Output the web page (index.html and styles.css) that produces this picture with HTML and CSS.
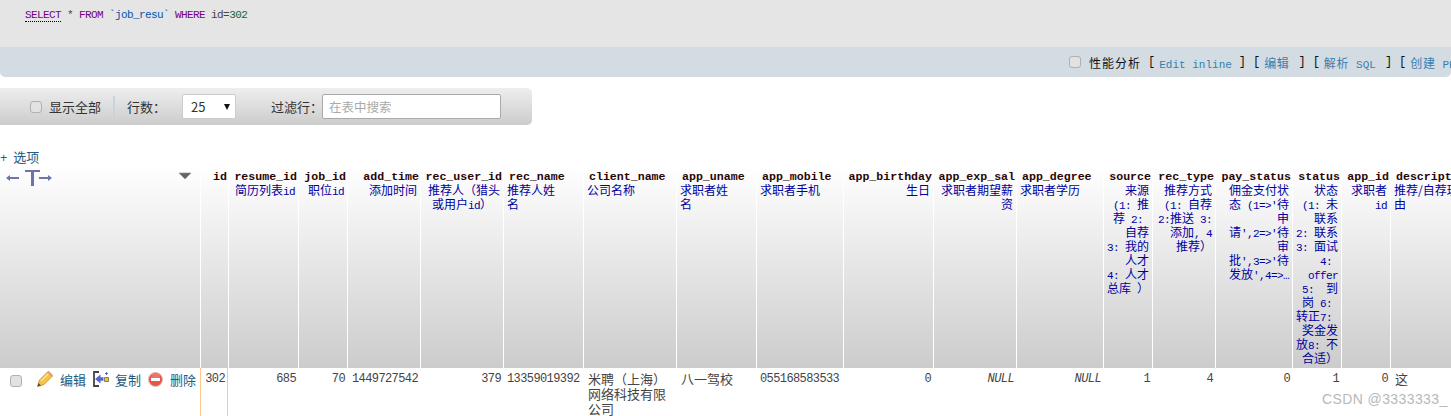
FILE: index.html
```html
<!DOCTYPE html>
<html lang="zh-CN">
<head>
<meta charset="utf-8">
<title>job_resu</title>
<link rel="stylesheet" href="styles.css">
</head>
<body>
<div class="sql"><span class="kw under">SELECT</span> * <span class="kw">FROM</span> <span class="str">`job_resu`</span> <span class="kw">WHERE</span> id=<span class="num">302</span></div>
<div class="bar">
  <input type="checkbox" class="chk">
  <span class="bar-t">性能分析</span>
  <span class="bk">[</span><a class="lnk lnk-e"><span class="lm">Edit inline</span></a><span class="bk bk-c">]</span>
  <span class="bk">[</span><a class="lnk">编辑</a><span class="bk bk-c">]</span>
  <span class="bk">[</span><a class="lnk">解析<span class="lm lm-s">SQL</span></a><span class="bk bk-c">]</span>
  <span class="bk">[</span><a class="lnk">创建<span class="lm lm-s">PHP</span></a>
</div>
<div class="filter">
  <input type="checkbox" class="chk">
  <span class="f-all">显示全部</span>
  <span class="sep"></span>
  <span class="f-rows">行数：</span>
  <span class="sel">25<i class="tri"></i></span>
  <span class="f-flt">过滤行：</span>
  <input class="search" type="text" placeholder="在表中搜索">
</div>
<div class="opts"><a><span class="plus">+</span>选项</a></div>
<table class="data">
<colgroup>
<col class="c0"><col class="c1"><col class="c2"><col class="c3"><col class="c4"><col class="c5"><col class="c6"><col class="c7"><col class="c8"><col class="c9"><col class="c10"><col class="c11"><col class="c12"><col class="c13"><col class="c14"><col class="c15"><col class="c16"><col class="c17"><col class="c18">
</colgroup>
<thead>
<tr>
<th class="act-h">
  <div class="act-top">
    <svg class="lr" width="48" height="16" viewBox="0 0 48 16"><path d="M1 8l4-3v2h9v2H5v2z M47 8l-4-3v2h-9v2h9v2z M20 0h15v2h-6v14h-3V2h-6z" fill="#6b75ab"/></svg>
    <svg class="sort" width="12" height="8" viewBox="0 0 12 8"><path d="M0 1h12L6 7z" fill="#666" stroke="#888" stroke-width=".6"/></svg>
  </div>
</th>
<th class="r"><b>id</b></th>
<th class="r"><b>resume_id</b><br>简历列表<span class="m">id</span></th>
<th class="r"><b>job_id</b><br>职位<span class="m">id</span></th>
<th class="r"><b>add_time</b><br>添加时间</th>
<th class="r"><b>rec_user_id</b><br>推荐人（猎头<br><span class="ctr">或用户<span class="m">id</span>）</span></th>
<th class="l"><b>rec_name</b><br>推荐人姓<br>名</th>
<th class="l"><b>client_name</b><br>公司名称</th>
<th class="l"><b>app_uname</b><br>求职者姓<br>名</th>
<th class="l"><b>app_mobile</b><br>求职者手机</th>
<th class="r"><b>app_birthday</b><br>生日</th>
<th class="r"><b>app_exp_sal</b><br>求职者期望薪<br>资</th>
<th class="l"><b>app_degree</b><br>求职者学历</th>
<th class="r"><b>source</b><br>来源<br><span class="m">(1: </span>推<br>荐<span class="m"> 2:&nbsp;</span><br>自荐<br><span class="m">3: </span>我的<br>人才<br><span class="m">4: </span>人才<br>总库<span class="m"> </span>）</th>
<th class="r"><b>rec_type</b><br>推荐方式<br><span class="m">(1: </span>自荐<br><span class="m">2:</span>推送<span class="m"> 3:</span><br>添加<span class="m">, 4</span><br>推荐）</th>
<th class="r"><b>pay_status</b><br>佣金支付状<br>态<span class="m"> (1=&gt;'</span>待<br>申<br>请<span class="m">',2=&gt;'</span>待<br>审<br>批<span class="m">',3=&gt;'</span>待<br>发放<span class="m">',4=&gt;…</span></th>
<th class="r"><b>status</b><br>状态<br><span class="m">(1: </span>未<br>联系<br><span class="m">2: </span>联系<br><span class="m">3: </span>面试<br><span class="m">4:&nbsp;</span><br><span class="m">offer</span><br><span class="m">5:&nbsp; </span>到<br>岗<span class="m"> 6:&nbsp;</span><br>转正<span class="m">7:&nbsp;</span><br>奖金发<br>放<span class="m">8: </span>不<br>合适）</th>
<th class="r"><b>app_id</b><br>求职者<br><span class="m">id</span></th>
<th class="l"><b>description</b><br>推荐/自荐理<br>由</th>
</tr>
</thead>
<tbody>
<tr>
<td class="acts">
  <div class="act-row">
    <input type="checkbox" class="chk row-chk">
    <svg class="ico pencil" width="16" height="16" viewBox="0 0 16 16"><path d="M.5 15.500L2.500 9 10.500 1 15 5.500 7 13.500z" fill="#f4c24a" stroke="#c08c2c" stroke-width=".8"/><path d="M4 10l7.500-7.500" stroke="#fbe39a" stroke-width="1.400"/><path d="M10.500 1l1-1 4.500 4.500-1 1z" fill="#ee9f8c" stroke="#c08c2c" stroke-width=".5"/><path d="M.5 15.500L1.500 12l2.500 2.500z" fill="#5a4a30"/></svg>
    <a class="act">编辑</a>
    <svg class="ico copy" width="16" height="16" viewBox="0 0 16 16"><path d="M6 1H1v14h5" fill="none" stroke="#444" stroke-width="1.800"/><path d="M2 8l5.500-4.500v2.800h3v3.400h-3v2.800z" fill="#5a63d0"/><path d="M11.500 6.500h4v4h-4z" fill="#f5c518" stroke="#555" stroke-width=".7"/><path d="M13.500 1v3M12 2.500h3" stroke="#5a63d0"/></svg>
    <a class="act">复制</a>
    <svg class="ico del" width="15" height="15" viewBox="0 0 15 15"><circle cx="7.500" cy="7.500" r="7" fill="#e0574c" stroke="#dcc4bc"/><circle cx="7.500" cy="5" r="4.500" fill="#ec8a80" opacity=".6"/><rect x="3" y="6" width="9" height="3" fill="#fff"/></svg>
    <a class="act">删除</a>
  </div>
</td>
<td class="mark num-c">302</td>
<td class="num-c">685</td>
<td class="num-c">70</td>
<td class="num-c">1449727542</td>
<td class="num-c">379</td>
<td class="num-l">13359019392</td>
<td class="txt">米聘（上海）网络科技有限公司</td>
<td class="txt">八一驾校</td>
<td class="num-l">055168583533</td>
<td class="num-c">0</td>
<td class="null">NULL</td>
<td class="null">NULL</td>
<td class="num-c">1</td>
<td class="num-c">4</td>
<td class="num-c">0</td>
<td class="num-c">1</td>
<td class="num-c">0</td>
<td class="txt">这</td>
</tr>
</tbody>
</table>
<div class="wm">CSDN @3333333_</div>
</body>
</html>
```
FILE: styles.css
```css
html, body {
  margin: 0;
  height: 416px;
  overflow: hidden;
  background: #fff;
}
body {
  position: relative;
  font-family: "Noto Sans CJK SC", "Liberation Sans", sans-serif;
  font-size: 13px;
  color: #444;
}
.sql {
  height: 47px;
  box-sizing: border-box;
  padding: 8px 0 0 25px;
  background: #e5e5e5;
  font: 11px/15px "Liberation Mono", monospace;
  letter-spacing: -.6px;
  color: #444;
}
.kw { color: #770088; }
.under { border-bottom: 1px dotted #000; }
.str { color: #0055aa; }
.num { color: #116644; }
.bar {
  height: 30px;
  display: flex;
  align-items: center;
  padding-left: 1069px;
  background: #d3dce3;
  border-radius: 0 0 5px 5px;
  white-space: nowrap;
  overflow: hidden;
  color: #111;
  font-size: 12px;
}
.chk {
  appearance: none;
  width: 12px;
  height: 12px;
  margin: 0;
  flex: none;
  background: #e2e2e2;
  border: 1px solid #b0b0b0;
  border-radius: 3px;
  box-sizing: border-box;
}
.bar-t { margin: 0 7px 0 8px; letter-spacing: 1px; }
.bk { font: 12px "Liberation Mono", monospace; }
.bk-c { margin-right: 7px; }
.lnk { color: #3a7ead; margin: 0 9px 0 4px; letter-spacing: .6px; }
.lnk-e { margin-right: 7px; }
.lm { font: 11px "Liberation Mono", monospace; letter-spacing: 0; }
.lm-s { margin-left: 7px; }
.filter {
  margin-top: 11px;
  width: 532px;
  height: 37px;
  display: flex;
  align-items: center;
  box-sizing: border-box;
  padding-left: 30px;
  background: linear-gradient(#eeeeee, #cccccc);
  border-radius: 0 5px 5px 0;
  color: #333;
  white-space: nowrap;
}
.f-all { margin-left: 7px; }
.sep {
  width: 2px;
  height: 22px;
  margin: 0 12px 0 12px;
  background: #c8d4dc;
}
.f-rows { width: 55px; }
.sel {
  position: relative;
  box-sizing: border-box;
  width: 54px;
  height: 25px;
  padding-left: 8px;
  line-height: 24px;
  background: #fff;
  border: 1px solid #ccc;
  border-radius: 2px;
}
.tri {
  position: absolute;
  right: 5px;
  top: 9px;
  border-left: 3.500px solid transparent;
  border-right: 3.500px solid transparent;
  border-top: 6px solid #111;
}
.f-flt { margin-left: 35px; width: 51px; flex: none; }
.search {
  box-sizing: border-box;
  width: 179px;
  height: 25px;
  padding: 0 6px;
  font: 12.500px "Noto Sans CJK SC", sans-serif;
  background: #fff;
  border: 1px solid #aaa;
  border-radius: 2px;
}
.search::placeholder { color: #aaa; }
.opts {
  margin-top: 24px;
  height: 17px;
  line-height: 16px;
  color: #235a81;
}
.plus { margin-right: 6px; font-family: "Liberation Mono", monospace; font-size: 12px; }
.data {
  table-layout: fixed;
  width: 1500px;
  border-collapse: separate;
  border-spacing: 0;
}
.c0 { width: 200px; }
.c1 { width: 28px; }
.c2 { width: 70px; }
.c3 { width: 49px; }
.c4 { width: 73px; }
.c5 { width: 83px; }
.c6 { width: 80px; }
.c7 { width: 93px; }
.c8 { width: 80px; }
.c9 { width: 87px; }
.c10 { width: 90px; }
.c11 { width: 83px; }
.c12 { width: 87px; }
.c13 { width: 49px; }
.c14 { width: 63px; }
.c15 { width: 77px; }
.c16 { width: 49px; }
.c17 { width: 49px; }
.c18 { width: 110px; }
th {
  padding: 3px 3px 3px 3px;
  vertical-align: top;
  white-space: nowrap;
  overflow: hidden;
  font-size: 12px;
  font-weight: 400;
  line-height: 14px;
  color: #0000a0;
  background: linear-gradient(#ffffff, #cccccc);
  border-left: 1px solid #fff;
}
th b {
  font: bold 11.600px/0 "Liberation Mono", monospace;
  color: #2a0505;
  vertical-align: 1px;
  margin-right: -2px;
}
th:first-child { border-left: 0; padding-left: 5px; }
.r { text-align: right; }
.l { text-align: left; }
.l b { margin-left: 2px; }
.ctr { display: block; text-align: center; }
.m { font: 11px/0 "Liberation Mono", monospace; letter-spacing: -.6px; white-space: pre; }
.act-top { display: flex; justify-content: space-between; align-items: flex-start; margin: 1px 6px 0 0; }
.sort { margin-top: 2px; }
td {
  padding: 3px 2px 0 4px;
  vertical-align: top;
  line-height: 15px;
  border-left: 1px solid transparent;
  overflow: hidden;
}
td.mark { border-left-color: #ffc98a; border-right: 1px solid #ffc98a; }
.num-c, .num-l, .null { font: 12px/15px "Liberation Mono", monospace; letter-spacing: -.6px; color: #444; padding-top: 4px; }
.num-l { padding-left: 3px; }
.num-c, .null { text-align: right; }
.null { font-style: italic; }
.act-row { display: flex; align-items: center; margin-left: 5px; white-space: nowrap; }
.act { color: #235a81; flex: none; }
.ico { flex: none; }
.row-chk { margin-top: 4px; }
.pencil { margin: 0 7px 0 15px; }
.copy { margin: 0 6px 0 7px; }
.del { margin: 0 7px 0 7px; }
.wm {
  position: absolute;
  left: 1322px;
  top: 391px;
  font: 14px/16px "Liberation Sans", sans-serif;
  color: #b8b8b8;
  letter-spacing: .4px;
}
```
